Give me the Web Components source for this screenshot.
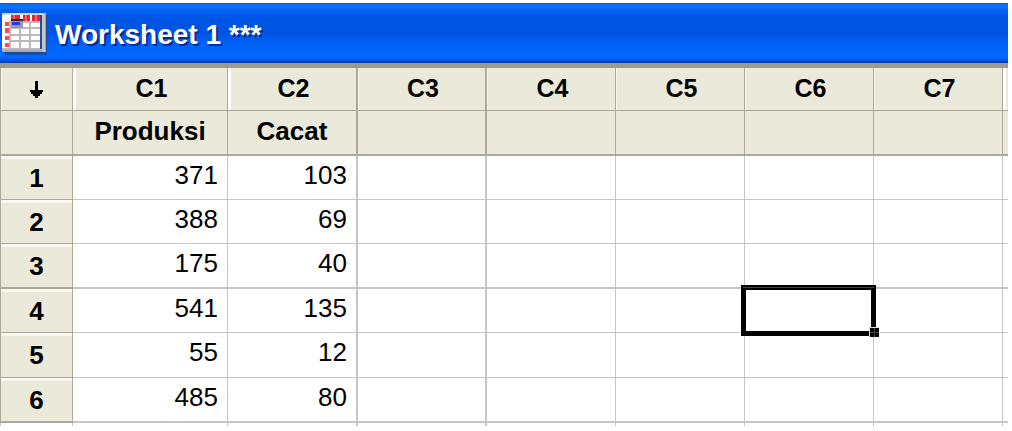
<!DOCTYPE html>
<html lang="id">
<head>
<meta charset="utf-8">
<title>Worksheet 1 ***</title>
<style>
  body { margin: 0; background: #fff; font-family: "Liberation Sans", Arial, sans-serif; font-size: 26px; line-height: 30px; color: #000; }
</style>
</head>
<body>
<sheet-window>
  <title-bar slot="title">Worksheet 1 ***</title-bar>
  <data-sheet></data-sheet>
</sheet-window>

<template id="window-template">
  <style>
    :host { display: block; padding: 3px 4px 4px 0; }
  </style>
  <slot name="title"></slot>
  <slot></slot>
</template>

<template id="title-template">
  <style>
    :host { display: block; }
    header {
      display: flex; align-items: center; gap: 8px; height: 60px; box-sizing: border-box; padding-left: 1px;
      background: linear-gradient(#0a5ce0 0, #0a78ff 3px, #0460f2 8px, #0054e3 16px, #0054e3 30px, #0062fa 42px, #006aff 54px, #0050dc 58px, #0036b4 60px);
    }
    h1 { margin: 0; padding-top: 3px; font-size: 28px; line-height: 30px; font-weight: bold; color: #fff; text-shadow: 2px 2px 0 #0a2a96; white-space: nowrap; }
    svg { display: block; flex: none; }
  </style>
  <header>
    <svg width="46" height="44" viewBox="0 0 46 44" aria-hidden="true">
      <path d="M4 4h42v40H4z" fill="#243c78" opacity=".65"/>
      <path d="M1 2h44v39H1z" fill="#aaa8a8"/>
      <path d="M1 2h40v36H1z" fill="#fff"/>
      <path d="M1 2h40v2H1z" fill="#d8d4dc"/>
      <path d="M10 4h9v6h-9zM22 4h7v6h-7zM31 4h8v6h-8z" fill="#e8242c"/>
      <path d="M13 4v6M25 4v6M35 4v6" stroke="#fff" stroke-width="1" opacity=".6"/>
      <path d="M4 11h4v4H4zM4 17h4v5H4zM4 25h4v4H4zM4 32h4v4H4z" fill="#f05050"/>
      <path d="M9 10v28M19 10v28M29 10v28M9 11h31M9 17h31M9 24h31M9 30h31M1 38h40" stroke="#bcb8bc" stroke-width="2" fill="none"/>
      <path d="M10 10h12v7H10z" fill="#9a98b0"/>
      <path d="M10 8h12v2H10z" fill="#3c2030"/>
      <path d="M11 11h8v3h-8z" fill="#2038e8"/>
      <path d="M40 4v34" stroke="#2848a8" stroke-width="2"/>
      <path d="M41 2h3v39h-3z" fill="#c8c4c0"/>
    </svg>
    <h1><slot></slot></h1>
  </header>
</template>

<template id="sheet-template">
  <style>
    :host { display: block; border-top: 5px solid #9d9a8c; }
    table { width: 100%; table-layout: fixed; border-collapse: separate; border-spacing: 0; }
    .rows { width: 73px; } .c1 { width: 155px; } .c2 { width: 130px; } .std { width: 129px; } .cut { width: 5px; }
    th, td { box-sizing: border-box; padding: 0; border: 0 solid #c6c6c6; border-right-width: 1px; border-bottom-width: 1px; white-space: nowrap; }
    th { background: #ebe9d9; border-color: #aca999; font-weight: bold; text-align: center; }
    td { height: 44px; padding: 0 9px 6px 0; text-align: right; }
    tr > :first-child { border-left-width: 1px; }
    tr > :last-child { border-right-width: 0; padding: 0; }
    tr > :nth-child(3), tr > :nth-child(4) { border-right-width: 2px; }
    .codes th { height: 43px; padding: 0 0 2px 3px; font-size: 25px; box-shadow: inset 1px 0 #f8f7ee; }
    .codes th:first-child, .codes th:last-child { padding: 0; }
    .codes th:nth-child(2), .codes th:nth-child(3), .codes th:last-child { box-shadow: inset 3px 0 #fff; }
    .names th { height: 45px; padding-bottom: 3px; border-bottom-width: 2px; }
    tbody th { box-shadow: inset 0 3px #f9f8f2; }
    .group > * { height: 45px; border-bottom-width: 2px; }
    .tall > * { height: 45px; }
    .stub td { height: 3px; padding: 0; border-bottom-width: 0; }
    button { display: block; width: 100%; height: 40px; margin: 0; padding: 0; border: 0; background: none; }
    svg { display: block; margin: auto; }
    .active { position: relative; }
    .cursor { position: absolute; inset: -4px -3px -4px -4px; border: 5px solid #000; }
    .cursor::before { content: ""; position: absolute; inset: -3px -3px auto -3px; height: 1px; background: #454545; }
    .cursor::after { content: ""; position: absolute; right: -8px; bottom: -6px; width: 9px; height: 9px; background: linear-gradient(#444, #444) 4px 0 / 1px 100% no-repeat, linear-gradient(#444, #444) 0 4px / 100% 1px no-repeat, #000; border-top: 1px solid #ddd; border-left: 1px solid #ddd; }
  </style>
  <table>
    <colgroup>
      <col class="rows"><col class="c1"><col class="c2"><col class="std"><col class="std"><col class="std"><col class="std"><col class="std"><col class="cut">
    </colgroup>
    <thead></thead>
    <tbody></tbody>
  </table>
</template>

<script>
  const clone = id => document.getElementById(id).content.cloneNode(true);

  class SheetWindow extends HTMLElement {
    constructor() { super(); this.attachShadow({ mode: "open" }).append(clone("window-template")); }
  }

  class TitleBar extends HTMLElement {
    constructor() { super(); this.attachShadow({ mode: "open" }).append(clone("title-template")); }
  }

  class DataSheet extends HTMLElement {
    constructor() {
      super();
      const root = this.attachShadow({ mode: "open" });
      root.append(clone("sheet-template"));
      const codes = ["C1", "C2", "C3", "C4", "C5", "C6", "C7", ""];
      const names = ["Produksi", "Cacat", "", "", "", "", "", ""];
      const data = [[371, 103], [388, 69], [175, 40], [541, 135], [55, 12], [485, 80]];
      const kinds = ["", "", "group", "", "tall", "group"];
      const arrow = `<button type="button" aria-label="Data entry direction"><svg width="13" height="17" viewBox="0 0 13 17"><path d="M5 0h3v9h5v2h-1v2h-2v2H8v2H5v-2H3v-2H1v-2H0V9h5z"/></svg></button>`;
      const heads = list => list.map(t => `<th scope="col">${t}</th>`).join("");
      const cell = (value, active) => active
        ? `<td class="active">${value}<div class="cursor"></div></td>`
        : `<td>${value}</td>`;
      root.querySelector("thead").innerHTML =
        `<tr class="codes"><th>${arrow}</th>${heads(codes)}</tr><tr class="names"><th></th>${heads(names)}</tr>`;
      root.querySelector("tbody").innerHTML = data.map((values, r) =>
        `<tr class="${kinds[r]}"><th scope="row">${r + 1}</th>${codes.map((_, c) =>
          cell(values[c] ?? "", r === 3 && c === 5)).join("")}</tr>`).join("") +
        `<tr class="stub">${"<td></td>".repeat(9)}</tr>`;
    }
  }

  customElements.define("sheet-window", SheetWindow);
  customElements.define("title-bar", TitleBar);
  customElements.define("data-sheet", DataSheet);
</script>
</body>
</html>
